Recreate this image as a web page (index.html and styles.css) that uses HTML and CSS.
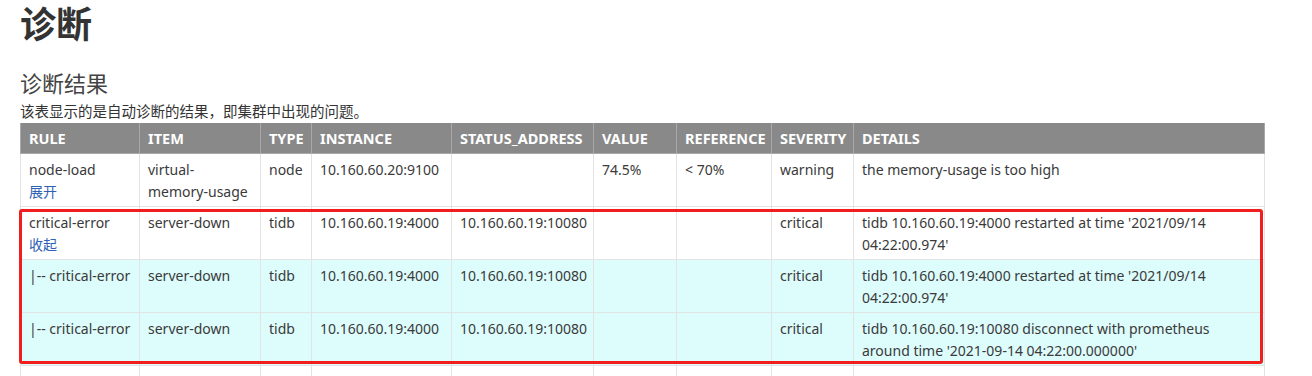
FILE: index.html
```html
<!DOCTYPE html>
<html lang="zh">
<head>
<meta charset="utf-8">
<title>诊断</title>
<link rel="stylesheet" href="styles.css">
</head>
<body>
<div class="page">
  <h1 class="title">诊断</h1>
  <h2 class="subtitle">诊断结果</h2>
  <p class="desc">该表显示的是自动诊断的结果，即集群中出现的问题。</p>
  <div class="table-wrap">
    <table class="diag">
      <colgroup>
        <col class="c-rule"><col class="c-item"><col class="c-type"><col class="c-inst"><col class="c-status"><col class="c-value"><col class="c-ref"><col class="c-sev"><col class="c-details">
      </colgroup>
      <thead>
        <tr>
          <th>RULE</th><th>ITEM</th><th>TYPE</th><th>INSTANCE</th><th>STATUS_ADDRESS</th><th>VALUE</th><th>REFERENCE</th><th>SEVERITY</th><th>DETAILS</th>
        </tr>
      </thead>
      <tbody>
        <tr>
          <td>node-load<br><a class="toggle" href="#">展开</a></td>
          <td>virtual-memory-usage</td>
          <td>node</td>
          <td>10.160.60.20:9100</td>
          <td></td>
          <td>74.5%</td>
          <td>&lt; 70%</td>
          <td>warning</td>
          <td>the memory-usage is too high</td>
        </tr>
        <tr>
          <td>critical-error<br><a class="toggle" href="#">收起</a></td>
          <td>server-down</td>
          <td>tidb</td>
          <td>10.160.60.19:4000</td>
          <td>10.160.60.19:10080</td>
          <td></td>
          <td></td>
          <td>critical</td>
          <td>tidb 10.160.60.19:4000 restarted at time '2021/09/14 04:22:00.974'</td>
        </tr>
        <tr class="child">
          <td>|-- critical-error</td>
          <td>server-down</td>
          <td>tidb</td>
          <td>10.160.60.19:4000</td>
          <td>10.160.60.19:10080</td>
          <td></td>
          <td></td>
          <td>critical</td>
          <td>tidb 10.160.60.19:4000 restarted at time '2021/09/14 04:22:00.974'</td>
        </tr>
        <tr class="child">
          <td>|-- critical-error</td>
          <td>server-down</td>
          <td>tidb</td>
          <td>10.160.60.19:4000</td>
          <td>10.160.60.19:10080</td>
          <td></td>
          <td></td>
          <td>critical</td>
          <td>tidb 10.160.60.19:10080 disconnect with prometheus around time '2021-09-14 04:22:00.000000'</td>
        </tr>
        <tr>
          <td>threshold-check</td>
          <td>leader-score-balance</td>
          <td>tikv</td>
          <td>10.160.60.19:20160</td>
          <td>10.160.60.19:20180</td>
          <td>100.00%</td>
          <td>&lt; 5.00%</td>
          <td>warning</td>
          <td>10.160.60.20:20160 max leader_score is 267.00, much higher than min</td>
        </tr>
      </tbody>
    </table>
    <div class="highlight-box"></div>
  </div>
</div>
</body>
</html>
```

FILE: styles.css
```css
html, body {
  margin: 0;
  padding: 0;
  background: #ffffff;
}

body {
  font-family: "Noto Sans", "Noto Sans CJK SC", sans-serif;
  color: #333333;
  overflow: hidden;
}

.page {
  padding: 0 0 0 20px;
}

.title {
  margin: 0;
  padding-top: 5px;
  font-family: "Noto Sans", "Noto Sans CJK SC", sans-serif;
  font-size: 36px;
  line-height: 40px;
  font-weight: 700;
  color: #333333;
}

.subtitle {
  margin: 24px 0 0 0;
  font-size: 22px;
  line-height: 28px;
  font-weight: 400;
  color: #444444;
}

.desc {
  margin: 3px 0 0 0;
  font-size: 14.5px;
  line-height: 23px;
  color: #333333;
}

.table-wrap {
  position: relative;
  width: 1244px;
}

.diag {
  width: 1244px;
  border-collapse: collapse;
  table-layout: fixed;
  font-size: 14px;
}

.c-rule { width: 119px; }
.c-item { width: 121px; }
.c-type { width: 51px; }
.c-inst { width: 140px; }
.c-status { width: 142px; }
.c-value { width: 83px; }
.c-ref { width: 95px; }
.c-sev { width: 82px; }
.c-details { width: 411px; }

.diag th {
  background: #898989;
  color: #ffffff;
  font-size: 14.5px;
  font-weight: 700;
  text-align: left;
  height: 30px;
  padding: 0 8px;
  line-height: 22px;
  border: 1px solid #a9a9a9;
  border-top: none;
  white-space: nowrap;
  overflow: hidden;
}

.diag td {
  vertical-align: top;
  text-align: left;
  padding: 5px 8px 3px 8px;
  height: 44px;
  line-height: 22px;
  border: 1px solid #e3e3e3;
  color: #3a3a3a;
  background: #ffffff;
}

.diag tr.child td {
  background: #ddfcfc;
}

.toggle {
  color: #2f62b5;
  text-decoration: none;
}

.highlight-box {
  position: absolute;
  left: -1px;
  top: 86px;
  width: 1244px;
  height: 155px;
  box-sizing: border-box;
  border: 3px solid #f21d1d;
  border-radius: 3px;
  pointer-events: none;
}
```
